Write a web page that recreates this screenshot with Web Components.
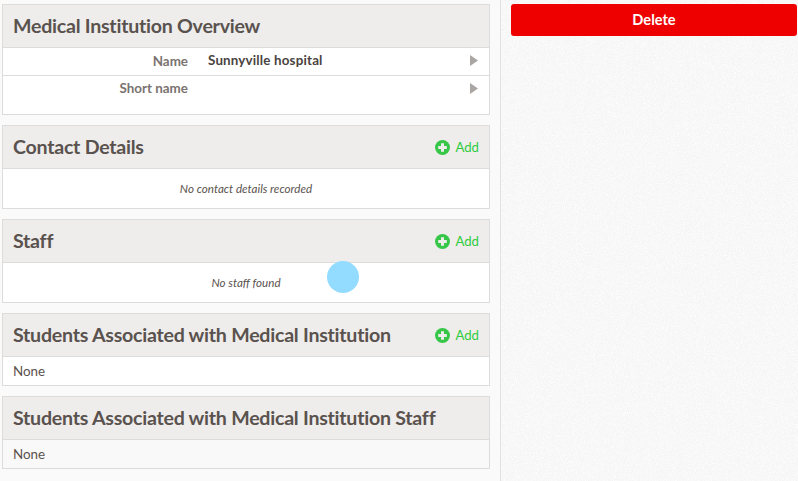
<!DOCTYPE html>
<html>
<head>
<meta charset="utf-8">
<title>Medical Institution</title>
<style>
  html, body { margin: 0; height: 100%; }
  body { font-family: Lato, "Open Sans", sans-serif; color: #5a524e; overflow: hidden; }
</style>
</head>
<body>
<app-layout>
  <info-panel heading="Medical Institution Overview">
    <info-row label="Name" value="Sunnyville hospital"></info-row>
    <info-row label="Short name" tall></info-row>
  </info-panel>
  <info-panel heading="Contact Details" can-add>
    <empty-note>No contact details recorded</empty-note>
  </info-panel>
  <info-panel heading="Staff" can-add>
    <empty-note>No staff found</empty-note>
  </info-panel>
  <info-panel heading="Students Associated with Medical Institution" can-add>
    <plain-note>None</plain-note>
  </info-panel>
  <info-panel heading="Students Associated with Medical Institution Staff" muted>
    <plain-note>None</plain-note>
  </info-panel>
  <delete-button slot="side">Delete</delete-button>
  <touch-dot slot="overlay"></touch-dot>
</app-layout>

<script>
const FONT = 'Lato, "Open Sans", sans-serif';

class AppLayout extends HTMLElement {
  constructor() {
    super();
    this.attachShadow({ mode: 'open' });
    this.shadowRoot.innerHTML = `
    <style>
      :host { display: grid; grid-template-columns: 500px 1fr; height: 481px; position: relative; overflow: hidden; }
      .main { background: #fafafa; padding: 4px 10px 0 2px; display: flex; flex-direction: column; gap: 10px; }
      .side { position: relative; border-left: 1px solid #e2e2e2; padding: 4px 1px 0 10px; background: #f5f5f5; }
      .grain { position: absolute; inset: 0; width: 100%; height: 100%; }
      .side slot { display: block; position: relative; }
    </style>
    <div class="main"><slot></slot></div>
    <div class="side">
      <svg class="grain" aria-hidden="true">
        <filter id="noise" x="0" y="0" width="100%" height="100%">
          <feTurbulence type="fractalNoise" baseFrequency="1.1" numOctaves="2" seed="4"/>
          <feColorMatrix values="0 0 0 0 1  0 0 0 0 1  0 0 0 0 1  2.2 0 0 0 -0.8"/>
        </filter>
        <rect width="100%" height="100%" filter="url(#noise)" opacity="0.9"/>
      </svg>
      <slot name="side"></slot>
    </div>
    <slot name="overlay"></slot>`;
  }
}

class InfoPanel extends HTMLElement {
  constructor() {
    super();
    this.attachShadow({ mode: 'open' });
    this.shadowRoot.innerHTML = `
    <style>
      :host { display: block; border: 1px solid #dedcdb; background: #fff; font-family: ${FONT}; }
      :host([muted]) { background: #f9f9f9; }
      header { height: 42px; background: #eeedec; border-bottom: 1px solid #dedcdb; display: flex; align-items: center; justify-content: space-between; padding: 0 10px; }
      h2 { margin: 0; font-size: 19.6px; line-height: 42px; letter-spacing: -0.25px; font-weight: 700; color: #5a524e; white-space: nowrap; }
      .add { display: flex; align-items: center; gap: 5px; color: #2ecc40; font-size: 13.2px; line-height: 15px; }
      svg { display: block; }
    </style>
    <header><h2></h2></header>
    <slot></slot>`;
    this.shadowRoot.querySelector('h2').textContent = this.getAttribute('heading');
    if (this.hasAttribute('can-add')) {
      const add = document.createElement('div');
      add.className = 'add';
      add.innerHTML = `<svg width="15" height="15" viewBox="0 0 15 15"><circle cx="7.5" cy="7.5" r="7.5" fill="#37c748"/><path d="M6 3.2h3V6h2.8v3H9v2.8H6V9H3.2V6H6z" fill="#eeedec"/></svg><span>Add</span>`;
      this.shadowRoot.querySelector('header').appendChild(add);
    }
  }
}

class InfoRow extends HTMLElement {
  constructor() {
    super();
    this.attachShadow({ mode: 'open' });
    this.shadowRoot.innerHTML = `
    <style>
      :host { display: grid; grid-template-columns: 185px 1fr 9px; column-gap: 20px; height: 27px; padding-right: 10px; font-size: 13.4px; font-weight: 700; line-height: 25px; }
      :host([tall]) { height: 38px; border-top: 1px solid #dedcdb; }
      .label { text-align: right; color: #7a7370; position: relative; top: 1px; }
      :host([tall]) .label { top: 0; }
      .value { color: #4a4340; letter-spacing: 0.16px; }
      svg { margin-top: 7px; display: block; }
    </style>
    <div class="label"></div>
    <div class="value"></div>
    <svg width="8" height="11" viewBox="0 0 8 11"><path d="M0 0l8 5.5L0 11z" fill="#aaa6a4"/></svg>`;
    this.shadowRoot.querySelector('.label').textContent = this.getAttribute('label');
    this.shadowRoot.querySelector('.value').textContent = this.getAttribute('value') || '';
  }
}

class EmptyNote extends HTMLElement {
  constructor() {
    super();
    this.attachShadow({ mode: 'open' });
    this.shadowRoot.innerHTML = `
    <style>
      :host { display: block; height: 39px; line-height: 40px; text-align: center; font-style: italic; font-size: 11.6px; color: #5a524e; }
    </style>
    <slot></slot>`;
  }
}

class PlainNote extends HTMLElement {
  constructor() {
    super();
    this.attachShadow({ mode: 'open' });
    this.shadowRoot.innerHTML = `
    <style>
      :host { display: block; height: 28px; line-height: 29px; padding-left: 10px; font-size: 13.4px; color: #5a524e; }
    </style>
    <slot></slot>`;
  }
}

class DeleteButton extends HTMLElement {
  constructor() {
    super();
    this.attachShadow({ mode: 'open' });
    this.shadowRoot.innerHTML = `
    <style>
      :host { display: block; height: 32px; line-height: 32px; background: #ee0000; border-radius: 3px; color: #fff; text-align: center; font-family: ${FONT}; font-weight: 700; font-size: 14.6px; }
    </style>
    <slot></slot>`;
  }
}

class TouchDot extends HTMLElement {
  constructor() {
    super();
    this.attachShadow({ mode: 'open' });
    this.shadowRoot.innerHTML = `
    <style>
      :host { position: absolute; left: 327px; top: 261px; width: 32px; height: 32px; border-radius: 50%; background: #93dcff; }
    </style>`;
  }
}

customElements.define('app-layout', AppLayout);
customElements.define('info-panel', InfoPanel);
customElements.define('info-row', InfoRow);
customElements.define('empty-note', EmptyNote);
customElements.define('plain-note', PlainNote);
customElements.define('delete-button', DeleteButton);
customElements.define('touch-dot', TouchDot);
</script>
</body>
</html>
